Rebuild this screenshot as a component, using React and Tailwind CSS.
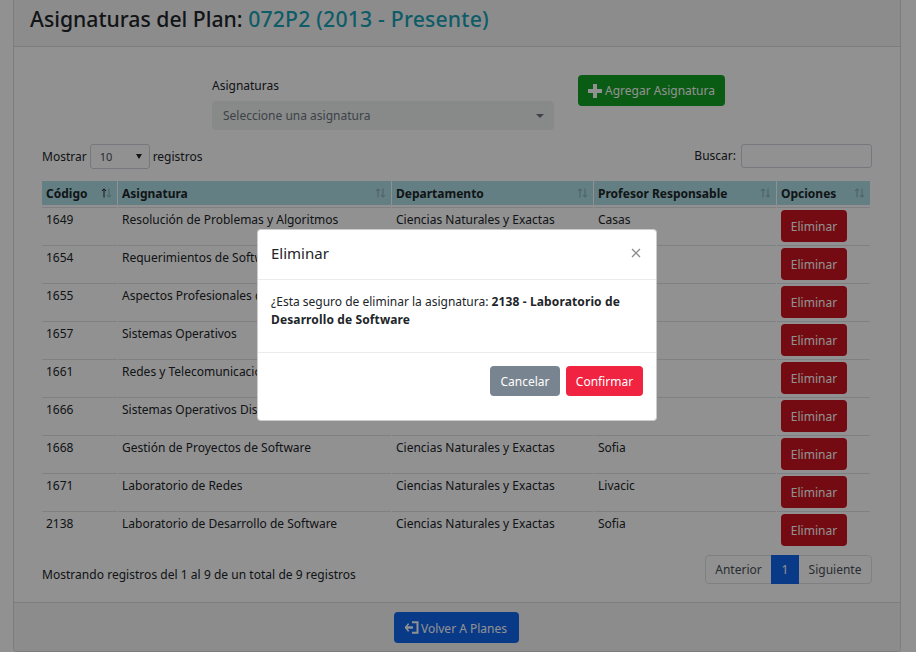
const rows = [
  ["1649", "Resolución de Problemas y Algoritmos", "Ciencias Naturales y Exactas", "Casas"],
  ["1654", "Requerimientos de Software", "Ciencias Naturales y Exactas", "Sofia"],
  ["1655", "Aspectos Profesionales del Software", "Ciencias Naturales y Exactas", "Sofia"],
  ["1657", "Sistemas Operativos", "Ciencias Naturales y Exactas", "Casas"],
  ["1661", "Redes y Telecomunicaciones", "Ciencias Naturales y Exactas", "Livacic"],
  ["1666", "Sistemas Operativos Distribuidos", "Ciencias Naturales y Exactas", "Casas"],
  ["1668", "Gestión de Proyectos de Software", "Ciencias Naturales y Exactas", "Sofia"],
  ["1671", "Laboratorio de Redes", "Ciencias Naturales y Exactas", "Livacic"],
  ["2138", "Laboratorio de Desarrollo de Software", "Ciencias Naturales y Exactas", "Sofia"],
];
const heads = [["Código", 75, true], ["Asignatura", 273], ["Departamento", 201], ["Profesor Responsable", 182], ["Opciones", 93]];

function Sort({ active }) {
  return (
    <svg width="11" height="10" viewBox="0 0 11 10" className="shrink-0">
      <path d="M3 9.5V1M1 3l2-2.2L5 3" fill="none" stroke={active ? "#212529" : "#8aa6aa"} strokeWidth="1" />
      <path d="M8 .5V9M6 7l2 2.2L10 7" fill="none" stroke="#8aa6aa" strokeWidth="1" />
    </svg>
  );
}

export default function App() {
  return (
    <div className="relative w-[916px] h-[652px] overflow-hidden bg-white text-[#212529] text-[12px] leading-[18px] font-['Noto_Sans','Open_Sans',sans-serif]">
      <div className="ml-[13px] w-[888px] h-[652px] flex flex-col border-x border-b border-[#dcdcdc] rounded-b-[4px] overflow-hidden">
        <div className="h-[47px] shrink-0 bg-[#f7f7f7] border-b border-[#dcdcdc] pl-[16px] pt-[3px]">
          <h1 className="text-[21.2px] leading-[32px] font-medium whitespace-nowrap">
            Asignaturas del Plan: <span className="text-[#17a2b8] tracking-[0.2px]">072P2 (2013 - Presente)</span>
          </h1>
        </div>

        <div className="flex-1 min-h-0 pl-[27px] flex flex-col">
          <div className="h-[97px] shrink-0 flex items-start pt-[28px] pl-[171px] gap-[24px]">
            <div className="w-[342px]">
              <div className="mt-[2px] h-[18px]">Asignaturas</div>
              <div className="mt-[6px] h-[29px] rounded-[4px] bg-[#f0f3f3] text-[#6c757d] pl-[11px] flex items-center justify-between pr-[10px]">
                <span className="pt-px">Seleccione una asignatura</span>
                <span className="w-0 h-0 border-x-[4px] border-x-transparent border-t-[4px] border-t-[#6c757d]"></span>
              </div>
            </div>
            <button className="w-[147px] h-[31px] rounded-[4px] bg-[#12a123] text-white flex items-center justify-center gap-[3px]">
              <svg width="14" height="14" viewBox="0 0 14 14"><path d="M5 0h4v5h5v4H9v5H5V9H0V5h5z" fill="#fff" /></svg>
              <span className="pt-px">Agregar Asignatura</span>
            </button>
          </div>

          <div className="h-[37px] shrink-0 flex items-start justify-between pr-[28px] pl-px">
            <div className="flex items-center gap-[2px] h-[25px]">
              <span>Mostrar</span>
              <div className="mx-[1px] w-[60px] h-[25px] border border-[#ced4da] rounded-[3px] bg-white flex items-center justify-between pl-[9px] pr-[7px] text-[11px] text-[#495057]">
                <span>10</span>
                <span className="w-0 h-0 border-x-[3.5px] border-x-transparent border-t-[5px] border-t-[#212529]"></span>
              </div>
              <span>registros</span>
            </div>
            <div className="flex items-center gap-[5px] h-[24px]">
              <span>Buscar:</span>
              <div className="w-[131px] h-[24px] border border-[#ced4da] rounded-[3px] bg-white"></div>
            </div>
          </div>

          <table className="table-fixed border-separate border-spacing-x-[1px] border-spacing-y-0 w-[830px] shrink-0">
            <colgroup>
              {heads.map(([h, w]) => <col key={h} style={{ width: w }} />)}
            </colgroup>
            <thead>
              <tr>
                {heads.map(([h, , active]) => (
                  <th key={h} className="h-[26px] p-0 text-left font-bold align-top">
                    <div className="h-[24px] bg-[#aedfe6] pl-[4px] pr-[5px] flex items-center justify-between">
                      <span className="pt-[2px]">{h}</span>
                      <Sort active={active} />
                    </div>
                  </th>
                ))}
              </tr>
            </thead>
            <tbody>
              {rows.map((r) => (
                <tr key={r[0]}>
                  {r.map((c) => (
                    <td key={c} className="h-[38px] p-0 pl-[4px] pt-[3px] align-top border-t border-[#dee2e6] whitespace-nowrap overflow-hidden">{c}</td>
                  ))}
                  <td className="h-[38px] p-0 pl-[4px] pt-[2px] align-top border-t border-[#dee2e6]">
                    <button className="w-[66px] h-[32px] pt-px rounded-[4px] bg-[#cc1420] text-white">Eliminar</button>
                  </td>
                </tr>
              ))}
            </tbody>
          </table>

          <div className="mt-[6px] flex justify-between items-center pr-[28px] pl-px">
            <span className="mt-[10px] tracking-[0.03px]">Mostrando registros del 1 al 9 de un total de 9 registros</span>
            <div className="flex h-[29px] border border-[#dee2e6] rounded-[4px] text-[#495057] bg-white">
              <span className="w-[65px] flex items-center justify-center">Anterior</span>
              <span className="w-[28px] -my-px flex items-center justify-center bg-[#0f66f0] text-white">1</span>
              <span className="w-[72px] flex items-center justify-center">Siguiente</span>
            </div>
          </div>
        </div>

        <div className="h-[49px] shrink-0 bg-[#f7f7f7] border-t border-[#dcdcdc] flex justify-center pt-[9px] pr-[2px]">
          <button className="w-[125px] h-[31px] rounded-[4px] bg-[#0f66f0] text-white flex items-center justify-center gap-[2px]">
            <svg width="14" height="13" viewBox="0 0 14 13" fill="none" stroke="#fff">
              <path d="M7 1.2h5.5v10.6H7" strokeWidth="2" />
              <path d="M0 6.5h8" strokeWidth="2.4" />
              <path d="M3.6 2.6L0.8 6.5l2.8 3.9" strokeWidth="1.6" />
            </svg>
            <span className="pt-[2px]">Volver A Planes</span>
          </button>
        </div>
      </div>

      <div className="absolute inset-0 bg-black/[0.43]"></div>

      <div className="absolute left-[257px] top-[229px] w-[400px] h-[192px] bg-white rounded-[4px] border border-black/20 flex flex-col">
        <div className="h-[50px] shrink-0 border-b border-[#e9ecef] pl-[13px] pr-[15px] pb-[4px] flex items-center justify-between">
          <span className="text-[15px]">Eliminar</span>
          <svg width="10" height="10" viewBox="0 0 10 10"><path d="M1 1l8 8M9 1l-8 8" stroke="#8a8a8a" strokeWidth="1.3" /></svg>
        </div>
        <div className="h-[73px] shrink-0 border-b border-[#e9ecef] pl-[13px] pr-[20px] pt-[13px]">
          ¿Esta seguro de eliminar la asignatura: <b className="tracking-[0.12px]">2138 - Laboratorio de Desarrollo de Software</b>
        </div>
        <div className="flex-1 flex justify-end gap-[6px] pr-[13px] pt-[13px]">
          <button className="w-[70px] h-[30px] pt-px rounded-[4px] bg-[#78848f] text-white">Cancelar</button>
          <button className="w-[77px] h-[30px] pt-px rounded-[4px] bg-[#f02340] text-white">Confirmar</button>
        </div>
      </div>
    </div>
  );
}
